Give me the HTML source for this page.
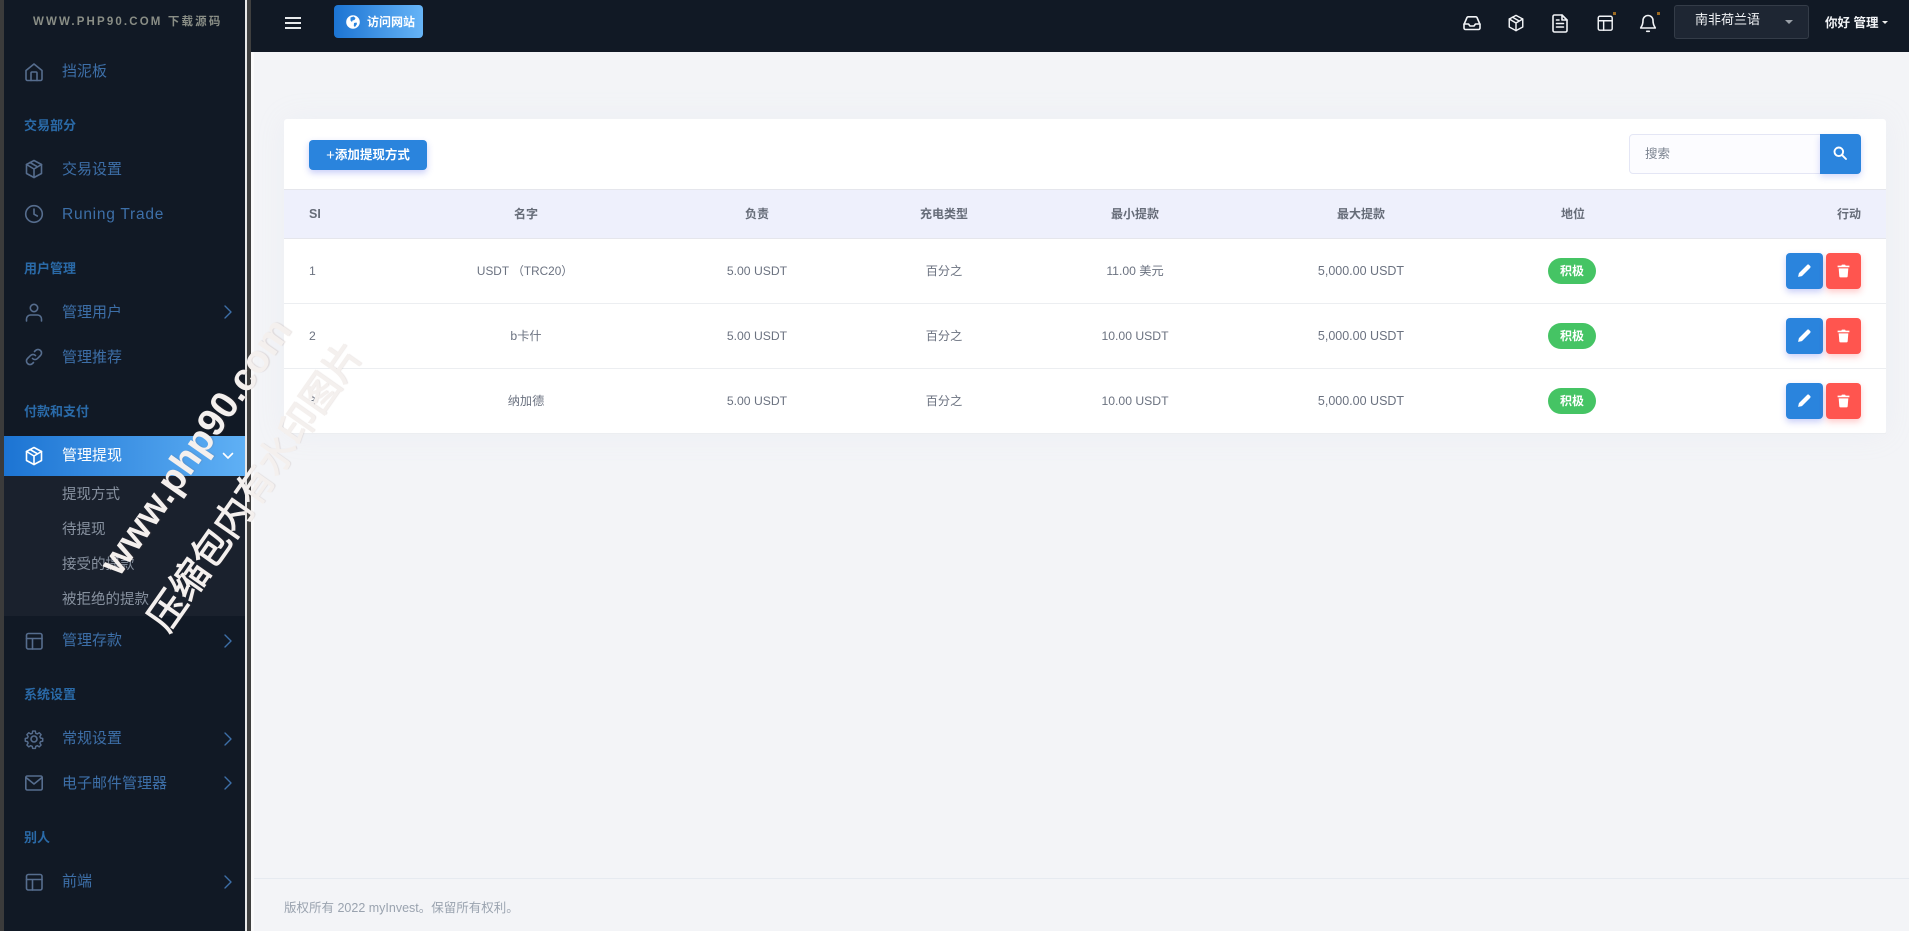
<!DOCTYPE html>
<html lang="zh"><head><meta charset="utf-8"><title>管理提现</title>
<style>
*{box-sizing:border-box}
html,body{margin:0;padding:0;width:1909px;height:931px;overflow:hidden;background:#f3f4f7;font-family:"Liberation Sans","Noto Sans CJK SC",sans-serif}
.a{position:absolute;white-space:nowrap}
.t{position:absolute;white-space:nowrap;height:20px;line-height:20px}
.nav{left:62px;font-size:15px;color:#3d6fa8}
.sec{left:24px;font-size:13px;font-weight:700;color:#2a6aa8}
.sub{left:62px;font-size:14.5px;color:#87919f}
.c{position:absolute;white-space:nowrap;width:220px;height:20px;line-height:20px;text-align:center;font-size:12.2px;color:#6b7280}
.h{font-weight:700;font-size:12px;color:#666c78}
svg{position:absolute;display:block;overflow:visible}
.ic{fill:none;stroke:#566d8e;stroke-width:1.6;stroke-linecap:round;stroke-linejoin:round}
.tp{fill:none;stroke:#f2f4f7;stroke-width:1.6;stroke-linecap:round;stroke-linejoin:round}
.chev{fill:none;stroke:#3d6fa8;stroke-width:1.4;stroke-linecap:round;stroke-linejoin:round}
.pill{position:absolute;left:1548px;width:48px;height:26px;border-radius:13px;background:#45c464;color:#fff;font-size:12px;font-weight:700;text-align:center;line-height:26px}
.be{position:absolute;left:1786px;width:37px;height:36px;border-radius:4px;background:#2a84dd;box-shadow:0 3px 7px rgba(60,80,230,.28)}
.bd{position:absolute;left:1826px;width:35px;height:36px;border-radius:4px;background:#ff554f;box-shadow:0 3px 7px rgba(255,80,80,.3)}
.ln{position:absolute;left:284px;width:1602px;height:1px;background:#eceef1}
.wm{position:absolute;width:600px;height:60px;line-height:60px;text-align:center;color:#f4f0ee;white-space:nowrap;transform:rotate(-55deg);text-shadow:1px 1px 1px rgba(120,90,80,.16)}
</style></head>
<body>
<svg width="0" height="0" style="position:absolute">
<defs>
<symbol id="chev" viewBox="0 0 16 16"><path d="M5 2l6 6-6 6"/></symbol>
<symbol id="box" viewBox="0 0 20 20"><path d="M10 1.5l7.5 4v9l-7.5 4-7.5-4v-9z"/><path d="M2.5 5.5L10 10l7.5-4.500M10 10v8.500M6 3.500l7.500 4.300"/></symbol>
<symbol id="tbl" viewBox="0 0 20 20"><rect x="2.500" y="2.500" width="15.500" height="15.500" rx="1.800"/><path d="M2.500 7.500h15.500M8.500 7.500v10.500"/></symbol>
<symbol id="pen" viewBox="0 0 14 14"><path fill="#fff" d="M1 13l.8-3.600L9.500 1.700a1.200 1.200 0 011.700 0l1.100 1.100a1.200 1.200 0 010 1.700L4.600 12.200z"/></symbol>
<symbol id="tr" viewBox="0 0 14 14"><path fill="#fff" d="M1.500 2.500H5l.5-1h3l.5 1h3.500V4h-11zM2.500 5h9l-.6 7.500a1 1 0 01-1 .9H4.100a1 1 0 01-1-.9z"/></symbol>
</defs></svg>

<!-- frame -->
<div class="a" style="left:0;top:0;width:4px;height:931px;background:#3b3b3b"></div>
<div class="a" style="left:4px;top:0;width:241px;height:931px;background:#111925"></div>
<div class="a" style="left:245px;top:0;width:1.500px;height:931px;background:#e8e8e8"></div>
<div class="a" style="left:246.500px;top:0;width:4.500px;height:931px;background:#3f3f3f"></div>
<div class="a" style="left:251px;top:52px;width:3px;height:879px;background:#fafafb"></div>
<div class="a" style="left:251px;top:0;width:1658px;height:52px;background:#111925"></div>

<!-- sidebar -->
<div class="t" style="left:33px;top:12px;font-size:11.500px;font-weight:700;letter-spacing:2.150px;color:#8a8e86">WWW.PHP90.COM 下载源码</div>

<svg class="ic" style="left:24px;top:62px" width="20" height="20" viewBox="0 0 20 20"><path d="M2 8.500L10 2l8 6.500V17a1.500 1.500 0 01-1.500 1.500h-13A1.500 1.500 0 012 17z"/><path d="M7 18.500V11a1 1 0 011-1h4a1 1 0 011 1v7.500"/></svg>
<div class="t nav" style="top:62px">挡泥板</div>
<div class="t sec" style="top:116px">交易部分</div>
<svg class="ic" style="left:24px;top:159px" width="20" height="20"><use href="#box"/></svg>
<div class="t nav" style="top:160px">交易设置</div>
<svg class="ic" style="left:25px;top:205px" width="18" height="18" viewBox="0 0 18 18"><circle cx="9" cy="9" r="8.300"/><path d="M9 4v5.200l3.300 1.800"/></svg>
<div class="t nav" style="top:205px;font-size:15.500px;letter-spacing:.75px">Runing Trade</div>
<div class="t sec" style="top:259px">用户管理</div>
<svg class="ic" style="left:25px;top:303px" width="18" height="18" viewBox="0 0 18 18"><circle cx="9" cy="5" r="3.700"/><path d="M1.500 18v-2a4 4 0 014-4h7a4 4 0 014 4v2"/></svg>
<div class="t nav" style="top:303px">管理用户</div>
<svg class="chev" style="left:220px;top:304px" width="16" height="16"><use href="#chev"/></svg>
<svg class="ic" style="left:25px;top:348px" width="18" height="18" viewBox="0 0 18 18"><path d="M7.500 10.500a3.500 3.500 0 005 0l3-3a3.500 3.500 0 00-5-5L9.500 3.500"/><path d="M10.500 7.500a3.500 3.500 0 00-5 0l-3 3a3.500 3.500 0 005 5l1-1"/></svg>
<div class="t nav" style="top:348px">管理推荐</div>
<div class="t sec" style="top:402px">付款和支付</div>

<div class="a" style="left:4px;top:436px;width:241px;height:40px;background:linear-gradient(90deg,#1c74d3,#5fb0f5)"></div>
<svg class="ic" style="left:24px;top:446px;stroke:#fff" width="20" height="20"><use href="#box"/></svg>
<div class="t nav" style="top:446px;color:#fff">管理提现</div>
<svg class="a" style="left:222px;top:449px;fill:none;stroke:#fff;stroke-width:1.600;stroke-linecap:round;stroke-linejoin:round" width="12" height="14" viewBox="0 0 12 14"><path d="M1.500 4.500L6 9l4.500-4.500"/></svg>

<div class="a" style="left:4px;top:476px;width:241px;height:140px;background:#1a212d"></div>
<div class="t sub" style="top:485px">提现方式</div>
<div class="t sub" style="top:520px">待提现</div>
<div class="t sub" style="top:555px">接受的提款</div>
<div class="t sub" style="top:590px">被拒绝的提款</div>

<svg class="ic" style="left:24px;top:631px" width="20" height="20"><use href="#tbl"/></svg>
<div class="t nav" style="top:631px">管理存款</div>
<svg class="chev" style="left:220px;top:633px" width="16" height="16"><use href="#chev"/></svg>
<div class="t sec" style="top:685px">系统设置</div>
<svg class="ic" style="left:24px;top:729px" width="20" height="20" viewBox="0 0 20 20"><circle cx="10" cy="10" r="3"/><path d="M8.500 1.200h3l.5 2.500 1.700.7 2.100-1.400 2.100 2.100-1.400 2.100.7 1.700 2.500.5v3l-2.500.5-.7 1.700 1.400 2.100-2.100 2.100-2.100-1.400-1.700.7-.5 2.400h-3l-.5-2.400-1.700-.7-2.100 1.400-2.100-2.100 1.400-2.100-.7-1.700-2.500-.5v-3l2.500-.5.7-1.700-1.400-2.100 2.100-2.100 2.100 1.400 1.700-.7z" transform="translate(1 1) scale(.9)"/></svg>
<div class="t nav" style="top:729px">常规设置</div>
<svg class="chev" style="left:220px;top:731px" width="16" height="16"><use href="#chev"/></svg>
<svg class="ic" style="left:25px;top:775px" width="18" height="16" viewBox="0 0 18 16"><rect x=".8" y="1" width="16.400" height="14" rx="1.500"/><path d="M1 2.500l8 6.500 8-6.500"/></svg>
<div class="t nav" style="top:774px">电子邮件管理器</div>
<svg class="chev" style="left:220px;top:775px" width="16" height="16"><use href="#chev"/></svg>
<div class="t sec" style="top:828px">别人</div>
<svg class="ic" style="left:24px;top:872px" width="20" height="20"><use href="#tbl"/></svg>
<div class="t nav" style="top:872px">前端</div>
<svg class="chev" style="left:220px;top:874px" width="16" height="16"><use href="#chev"/></svg>

<!-- topbar -->
<div class="a" style="left:285px;top:17px;width:16px;height:2px;background:#e8eaec"></div>
<div class="a" style="left:285px;top:22px;width:16px;height:2px;background:#e8eaec"></div>
<div class="a" style="left:285px;top:27px;width:16px;height:2px;background:#e8eaec"></div>
<div class="a" style="left:334px;top:5px;width:89px;height:33px;border-radius:4px;background:linear-gradient(90deg,#1c74d3,#66b4f7)"></div>
<svg class="a" style="left:346px;top:15px" width="14" height="14" viewBox="0 0 14 14"><circle cx="7" cy="7" r="6.800" fill="#fff"/><path fill="#2a84dd" d="M4.500 2.500l3-1 2 1.500-1 2-2 .5-.5 1.500-1.500-1.500zM8 8l2.500-.5.500 1.500-2 3-1.200-1z"/></svg>
<div class="t" style="left:367px;top:12px;font-size:12px;font-weight:700;color:#fff">访问网站</div>

<svg class="tp" style="left:1463px;top:14px" width="18" height="18" viewBox="0 0 18 18"><path d="M1 10.500V14a1.500 1.500 0 001.500 1.500h13A1.500 1.500 0 0017 14v-3.500L14 3.500a1.200 1.200 0 00-1-.7H5a1.200 1.200 0 00-1 .7z"/><path d="M1 10h4.500l1.500 2h4l1.500-2H17"/></svg>
<svg class="tp" style="left:1507px;top:14px" width="18" height="18" viewBox="0 0 20 20"><use href="#box"/></svg>
<svg class="tp" style="left:1552px;top:14px" width="16" height="18" viewBox="0 0 16 18"><path d="M1 2.500A1.500 1.500 0 012.500 1H10l5 5v10.500a1.500 1.500 0 01-1.500 1.500h-11A1.500 1.500 0 011 16.500z"/><path d="M10 1v5h5M4.500 9.500h7M4.500 13h7M4.500 6h2.500"/></svg>
<svg class="tp" style="left:1596px;top:14px" width="18" height="18" viewBox="0 0 20 20"><use href="#tbl"/></svg>
<div class="a" style="left:1613px;top:12px;width:3px;height:3px;background:#9c6a22"></div>
<svg class="tp" style="left:1640px;top:14px" width="16" height="19" viewBox="0 0 16 19"><path d="M8 1.500a5 5 0 015 5c0 5 2.300 7 2.300 7.500H.7c0-.5 2.300-2.500 2.300-7.500a5 5 0 015-5zM6.700 17.300h2.600"/></svg>
<div class="a" style="left:1657px;top:12px;width:3px;height:3px;background:#9c6a22"></div>

<div class="a" style="left:1674px;top:5px;width:135px;height:34px;background:#1e2633;border:1px solid #343c48;border-radius:3px"></div>
<div class="t" style="left:1695px;top:10px;font-size:13px;color:#f2f4f7">南非荷兰语</div>
<div class="a" style="left:1785px;top:20px;border:4px solid transparent;border-top:4px solid #9aa0a8;border-bottom:0"></div>
<div class="t" style="left:1825px;top:13px;font-size:12.500px;font-weight:700;color:#f2f4f7">你好 管理</div>
<div class="a" style="left:1882px;top:21px;border:3px solid transparent;border-top:3px solid #eee;border-bottom:0"></div>

<!-- card -->
<div class="a" style="left:284px;top:119px;width:1602px;height:315px;background:#fff;border-radius:3px;box-shadow:0 0 30px rgba(200,205,225,.12)"></div>
<div class="a" style="left:309px;top:140px;width:118px;height:30px;border-radius:4px;background:#2a84dd;box-shadow:0 3px 7px rgba(60,80,230,.28);color:#fff;font-size:12.500px;font-weight:700;text-align:center;line-height:30px"><span style="font-size:15px;font-weight:400;vertical-align:-1px">+</span>添加提现方式</div>
<div class="a" style="left:1629px;top:134px;width:192px;height:40px;background:#fcfcff;border:1px solid #e4e6f5;border-radius:4px 0 0 4px"></div>
<div class="t" style="left:1645px;top:144px;font-size:12.500px;color:#7b8390">搜索</div>
<div class="a" style="left:1820px;top:134px;width:41px;height:40px;background:#2a84dd;border-radius:0 4px 4px 0;box-shadow:0 3px 7px rgba(60,80,230,.22)"></div>
<svg class="a" style="left:1833px;top:146px;fill:none;stroke:#fff;stroke-width:1.900;stroke-linecap:round" width="14" height="14" viewBox="0 0 14 14"><circle cx="5.800" cy="5.800" r="4.300"/><path d="M9.300 9.300l3.700 3.700"/></svg>

<div class="a" style="left:284px;top:189px;width:1602px;height:50px;background:#eef0fc;border-top:1px solid #e5e6ec;border-bottom:1px solid #e5e6ec"></div>
<div class="c h" style="left:309px;top:204px;width:auto;font-size:12.500px">SI</div>
<div class="c h" style="left:416px;top:204px">名字</div>
<div class="c h" style="left:647px;top:204px">负责</div>
<div class="c h" style="left:834px;top:204px">充电类型</div>
<div class="c h" style="left:1025px;top:204px">最小提款</div>
<div class="c h" style="left:1251px;top:204px">最大提款</div>
<div class="c h" style="left:1463px;top:204px">地位</div>
<div class="c h" style="left:1641px;top:204px;text-align:right">行动</div>

<div class="ln" style="top:303px"></div>
<div class="ln" style="top:368px"></div>
<div class="ln" style="top:433px"></div>

<div class="c" style="left:309px;top:261px;width:auto">1</div>
<div class="c" style="left:415px;top:261px;font-size:11.800px">USDT （TRC20）</div>
<div class="c" style="left:647px;top:261px">5.00 USDT</div>
<div class="c" style="left:834px;top:261px">百分之</div>
<div class="c" style="left:1025px;top:261px">11.00 美元</div>
<div class="c" style="left:1251px;top:261px;font-size:12.500px">5,000.00 USDT</div>
<div class="pill" style="top:258px">积极</div>
<div class="be" style="top:253px"><svg style="left:11px;top:10px" width="15" height="15"><use href="#pen"/></svg></div>
<div class="bd" style="top:253px"><svg style="left:10px;top:10px" width="15" height="15"><use href="#tr"/></svg></div>

<div class="c" style="left:309px;top:326px;width:auto">2</div>
<div class="c" style="left:416px;top:326px">b卡什</div>
<div class="c" style="left:647px;top:326px">5.00 USDT</div>
<div class="c" style="left:834px;top:326px">百分之</div>
<div class="c" style="left:1025px;top:326px">10.00 USDT</div>
<div class="c" style="left:1251px;top:326px;font-size:12.500px">5,000.00 USDT</div>
<div class="pill" style="top:323px">积极</div>
<div class="be" style="top:318px"><svg style="left:11px;top:10px" width="15" height="15"><use href="#pen"/></svg></div>
<div class="bd" style="top:318px"><svg style="left:10px;top:10px" width="15" height="15"><use href="#tr"/></svg></div>

<div class="c" style="left:309px;top:391px;width:auto">3</div>
<div class="c" style="left:416px;top:391px">纳加德</div>
<div class="c" style="left:647px;top:391px">5.00 USDT</div>
<div class="c" style="left:834px;top:391px">百分之</div>
<div class="c" style="left:1025px;top:391px">10.00 USDT</div>
<div class="c" style="left:1251px;top:391px;font-size:12.500px">5,000.00 USDT</div>
<div class="pill" style="top:388px">积极</div>
<div class="be" style="top:383px"><svg style="left:11px;top:10px" width="15" height="15"><use href="#pen"/></svg></div>
<div class="bd" style="top:383px"><svg style="left:10px;top:10px" width="15" height="15"><use href="#tr"/></svg></div>

<!-- footer -->
<div class="a" style="left:254px;top:878px;width:1655px;height:1px;background:#e6eaf0"></div>
<div class="t" style="left:284px;top:898px;font-size:12.500px;color:#9aa3af">版权所有 2022 myInvest。保留所有权利。</div>

<!-- watermark -->
<div class="wm" style="left:-104px;top:417px;font-size:38.500px;font-weight:700">www.php90.com</div>
<div class="wm" style="left:-44px;top:457px;font-size:38px;-webkit-text-stroke:1px #f4f0ee">压缩包内有水印图片</div>
</body></html>
